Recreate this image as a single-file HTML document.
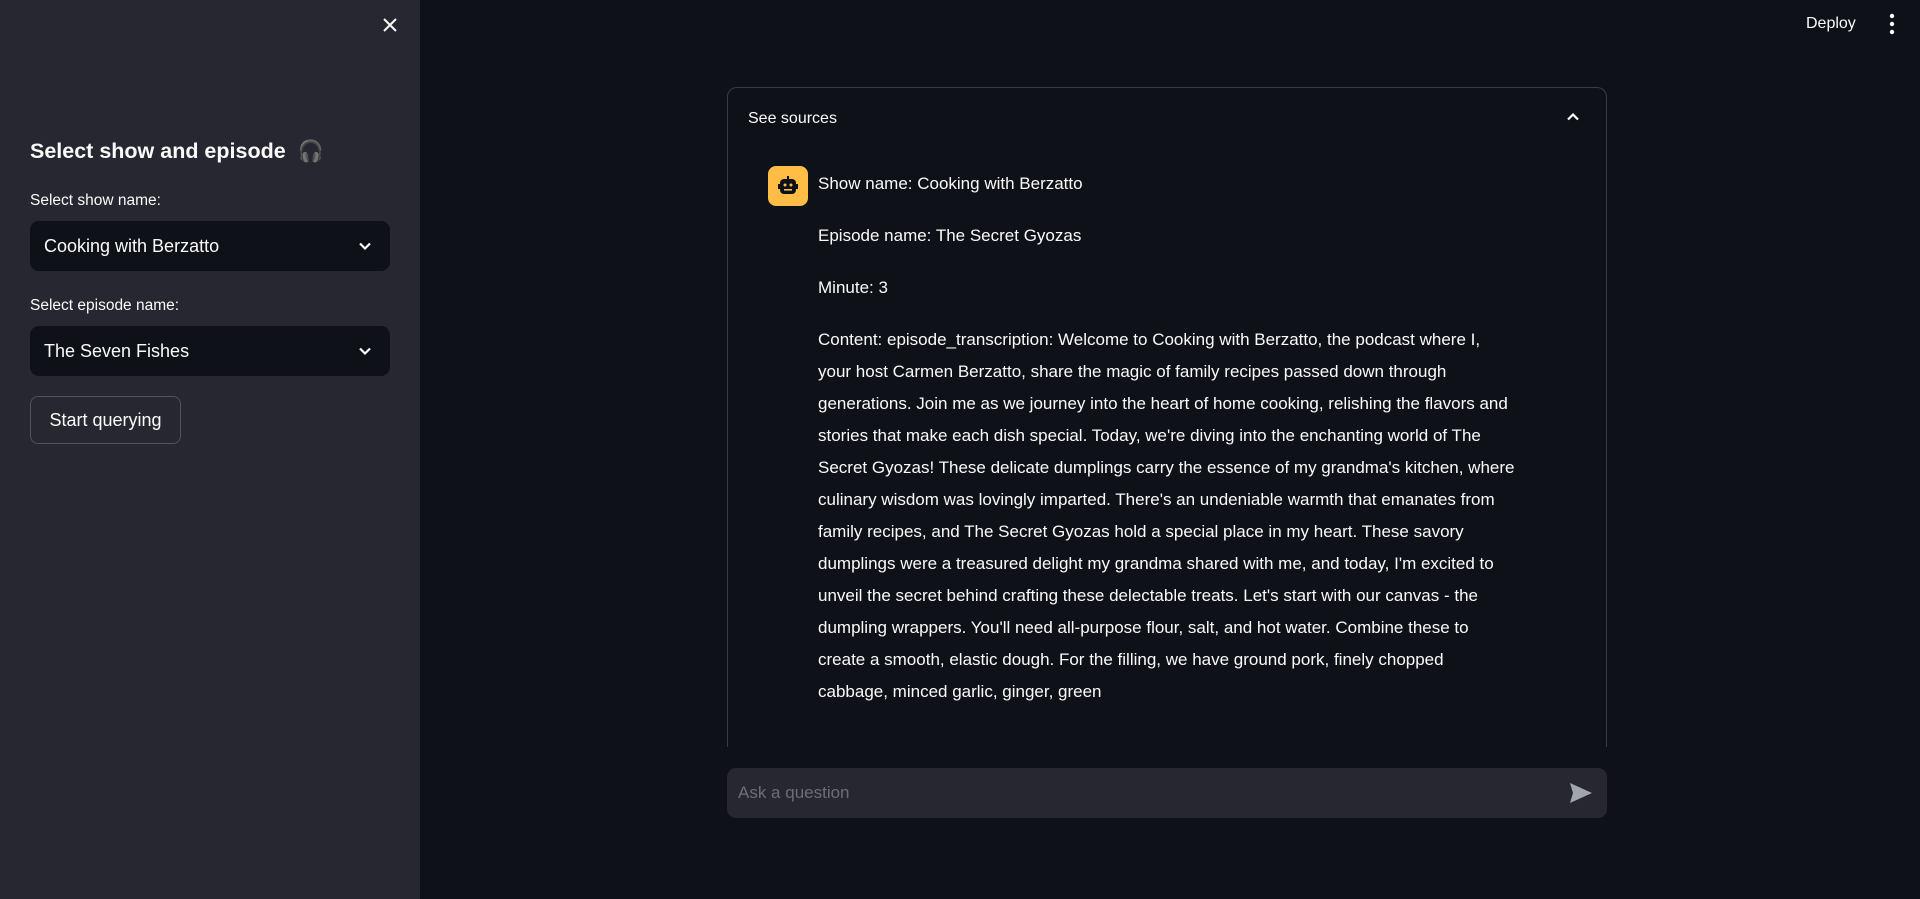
<!DOCTYPE html>
<html><head><meta charset="utf-8"><style>
*{margin:0;padding:0;box-sizing:border-box}
body{width:1920px;height:899px;background:#0e1117;color:#fafafa;font-family:"Liberation Sans",sans-serif;position:relative;overflow:hidden}
.sb{position:absolute;left:0;top:0;width:420px;height:899px;background:#262730}
.abs{position:absolute;white-space:nowrap}
.sel{position:absolute;left:30px;width:360px;height:50px;background:#0e1117;border-radius:9px;font-size:18px;line-height:50px;padding-left:14px}
.sel svg{position:absolute;right:18px;top:18px}
.box{position:absolute;left:727px;top:87px;width:880px;height:660px;border:1px solid #3a3c44;border-bottom:none;border-radius:10px 10px 0 0}
.ln{position:absolute;left:818px;font-size:17px;white-space:nowrap;line-height:20px}
</style></head><body>
<div class="sb">
<svg class="abs" style="left:381px;top:16px" width="18" height="18" viewBox="0 0 18 18"><path d="M3 3L15 15M15 3L3 15" stroke="#fafafa" stroke-width="2"/></svg>
<div class="abs" style="left:30px;top:139px;font-size:21.5px;font-weight:bold">Select show and episode&nbsp; <span style="font-size:21px;color:#c9bfd0">🎧</span></div>
<div class="abs" style="left:30px;top:192px;font-size:15.5px">Select show name:</div>
<div class="sel" style="top:221px">Cooking with Berzatto<svg width="14" height="14" viewBox="0 0 14 14"><path d="M2 4.5L7 9.5L12 4.5" stroke="#fafafa" stroke-width="2.2" fill="none"/></svg></div>
<div class="abs" style="left:30px;top:297px;font-size:15.5px">Select episode name:</div>
<div class="sel" style="top:326px">The Seven Fishes<svg width="14" height="14" viewBox="0 0 14 14"><path d="M2 4.5L7 9.5L12 4.5" stroke="#fafafa" stroke-width="2.2" fill="none"/></svg></div>
<div class="abs" style="left:30px;top:396px;width:151px;height:48px;border:1px solid #50525c;border-radius:8px;font-size:18px;line-height:46px;text-align:center">Start querying</div>
</div>
<div class="abs" style="left:1806px;top:15px;font-size:16px">Deploy</div>
<svg class="abs" style="left:1888px;top:13px" width="8" height="22" viewBox="0 0 8 22"><circle cx="4" cy="3" r="2.2" fill="#fafafa"/><circle cx="4" cy="11" r="2.2" fill="#fafafa"/><circle cx="4" cy="19" r="2.2" fill="#fafafa"/></svg>
<div class="box"></div>
<div class="abs" style="left:748px;top:110px;font-size:16px">See sources</div>
<svg class="abs" style="left:1566px;top:110px" width="14" height="14" viewBox="0 0 14 14"><path d="M2 9.5L7 4.5L12 9.5" stroke="#fafafa" stroke-width="2.2" fill="none"/></svg>
<div class="abs" style="left:768px;top:166px;width:40px;height:40px;background:#ffbd45;border-radius:8px">
<svg width="40" height="40" viewBox="0 0 40 40"><rect x="19" y="10" width="2" height="4" fill="#0e1117"/><rect x="12" y="13" width="16" height="15" rx="4" fill="#0e1117"/><rect x="10" y="18" width="3" height="5" fill="#0e1117"/><rect x="27" y="18" width="3" height="5" fill="#0e1117"/><circle cx="17" cy="19" r="1.5" fill="#ffbd45"/><circle cx="23" cy="19" r="1.5" fill="#ffbd45"/><rect x="16" y="23" width="8" height="1.6" fill="#ffbd45"/></svg></div>
<div class="ln" style="top:174px">Show name: Cooking with Berzatto</div>
<div class="ln" style="top:226px">Episode name: The Secret Gyozas</div>
<div class="ln" style="top:278px">Minute: 3</div>
<div class="ln" style="top:330px">Content: episode_transcription: Welcome to Cooking with Berzatto, the podcast where I,</div>
<div class="ln" style="top:362px">your host Carmen Berzatto, share the magic of family recipes passed down through</div>
<div class="ln" style="top:394px">generations. Join me as we journey into the heart of home cooking, relishing the flavors and</div>
<div class="ln" style="top:426px">stories that make each dish special. Today, we're diving into the enchanting world of The</div>
<div class="ln" style="top:458px">Secret Gyozas! These delicate dumplings carry the essence of my grandma's kitchen, where</div>
<div class="ln" style="top:490px">culinary wisdom was lovingly imparted. There's an undeniable warmth that emanates from</div>
<div class="ln" style="top:522px">family recipes, and The Secret Gyozas hold a special place in my heart. These savory</div>
<div class="ln" style="top:554px">dumplings were a treasured delight my grandma shared with me, and today, I'm excited to</div>
<div class="ln" style="top:586px">unveil the secret behind crafting these delectable treats. Let's start with our canvas - the</div>
<div class="ln" style="top:618px">dumpling wrappers. You'll need all-purpose flour, salt, and hot water. Combine these to</div>
<div class="ln" style="top:650px">create a smooth, elastic dough. For the filling, we have ground pork, finely chopped</div>
<div class="ln" style="top:682px">cabbage, minced garlic, ginger, green</div>
<div class="abs" style="left:727px;top:768px;width:880px;height:50px;background:#262730;border-radius:9px"></div>
<div class="abs" style="left:738px;top:783px;font-size:17px;color:#6b6d78">Ask a question</div>
<svg class="abs" style="left:1569px;top:782px" width="24" height="22" viewBox="0 0 24 22"><path d="M1 1L23 11L1 21L4 11Z" fill="#a3a5ad"/></svg>
</body></html>
